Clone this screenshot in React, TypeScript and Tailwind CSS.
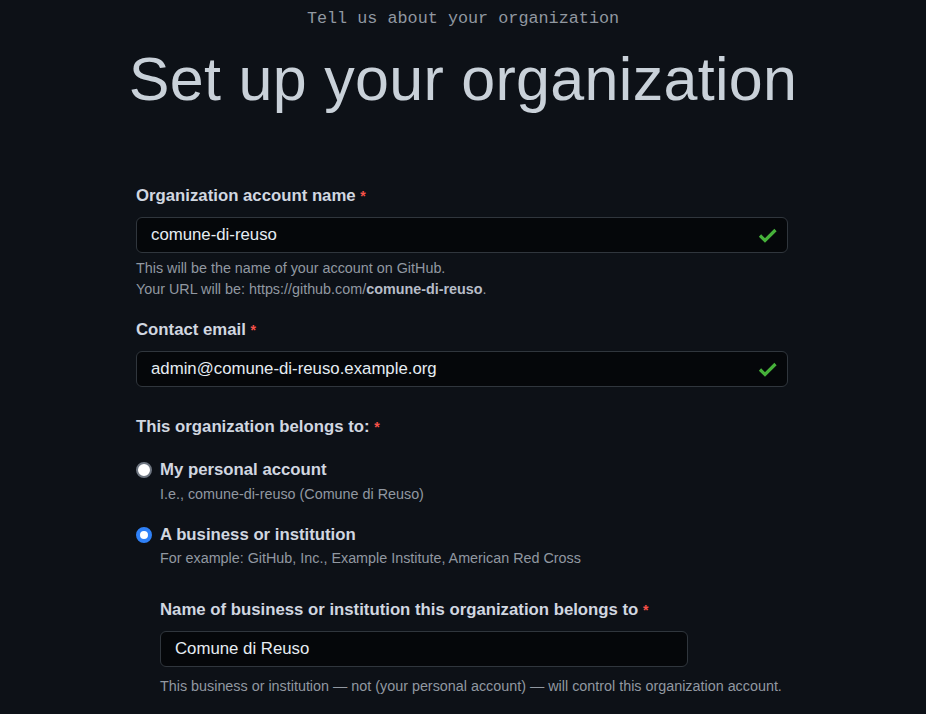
import React from "react";

const sans = { fontFamily: '"Liberation Sans", Arial, sans-serif' };

const Check = () => (
  <svg width="20" height="16" viewBox="0 0 20 16" fill="none" className="text-[#46b13a]">
    <path d="M2 8.5 L7 13.5 L17.5 3" stroke="currentColor" strokeWidth="3.2" strokeLinejoin="miter" />
  </svg>
);

const Label = ({ children }: { children: React.ReactNode }) => (
  <label className="block text-[16.75px] font-bold text-[#d1d7e0] leading-6">
    {children} <span className="text-[#f85149] text-[14px]">*</span>
  </label>
);

const Input = ({ value, ok, width }: { value: string; ok?: boolean; width: string }) => (
  <div
    className={`${width} h-[36px] flex items-center justify-between rounded-md border border-[#30363d] bg-[#05070a] pl-[14px] pr-[9px]`}
  >
    <span className="text-[16.8px] text-[#e6edf3]">{value}</span>
    {ok && <Check />}
  </div>
);

const Radio = ({ checked }: { checked?: boolean }) =>
  checked ? (
    <span className="mt-[4px] inline-block w-[16px] h-[16px] rounded-full border-[4px] border-[#2f81f7] bg-white shrink-0" />
  ) : (
    <span className="mt-[4px] inline-block w-[16px] h-[16px] rounded-full border-2 border-[#6e7681] bg-white shrink-0" />
  );

export default function App() {
  return (
    <div className="min-h-[714px] bg-[#0d1117] text-[#d1d7e0]" style={sans}>
      <div className="flex flex-col items-center">
        <p
          className="text-[16.8px] leading-5 text-[#9198a1] mt-[9px]"
          style={{ fontFamily: '"Liberation Mono", monospace' }}
        >
          Tell us about your organization
        </p>
        <h1 className="text-[61px] leading-[72px] text-[#c9d1d9] mt-[14px] tracking-[0.3px]">
          Set up your organization
        </h1>
      </div>

      <div className="w-[652px] ml-[136px] mt-[69px]">
        <Label>Organization account name</Label>
        <div className="mt-[9px]">
          <Input value="comune-di-reuso" ok width="w-[652px]" />
        </div>
        <p className="mt-[5px] text-[14.35px] leading-[21px] text-[#9198a1]">
          This will be the name of your account on GitHub.
          <br />
          Your URL will be: https://github.com/<b className="text-[#b7bdc8]">comune-di-reuso</b>.
        </p>

        <div className="mt-[18px]">
          <Label>Contact email</Label>
        </div>
        <div className="mt-[9px]">
          <Input value="admin@comune-di-reuso.example.org" ok width="w-[652px]" />
        </div>

        <div className="mt-[28px]">
          <Label>This organization belongs to:</Label>
        </div>

        <div className="mt-[19px] flex gap-[8px]">
          <Radio />
          <div>
            <div className="text-[16.75px] font-bold leading-6 text-[#d1d7e0] mb-[2px]">My personal account</div>
            <div className="text-[14.35px] leading-5 text-[#9198a1]">I.e., comune-di-reuso (Comune di Reuso)</div>
          </div>
        </div>

        <div className="mt-[19px] flex gap-[8px]">
          <Radio checked />
          <div>
            <div className="text-[16.75px] font-bold leading-6 text-[#d1d7e0] mb-[1px]">A business or institution</div>
            <div className="text-[14.35px] leading-5 text-[#9198a1]">
              For example: GitHub, Inc., Example Institute, American Red Cross
            </div>
          </div>
        </div>

        <div className="ml-[24px] mt-[30px]">
          <Label>Name of business or institution this organization belongs to</Label>
          <div className="mt-[9px]">
            <Input value="Comune di Reuso" width="w-[528px]" />
          </div>
          <p className="mt-[9px] text-[14.35px] leading-5 text-[#9198a1]">
            This business or institution — not (your personal account) — will control this organization account.
          </p>
        </div>
      </div>
    </div>
  );
}
